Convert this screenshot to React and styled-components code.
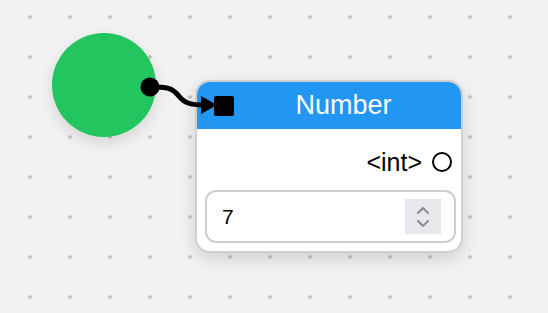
import styled, { createGlobalStyle } from "styled-components";

const GlobalStyle = createGlobalStyle`
  html, body {
    margin: 0;
    padding: 0;
    background: #f2f2f2;
    font-family: "Liberation Sans", Arial, sans-serif;
  }
`;

const Canvas = styled.div`
  position: relative;
  width: 548px;
  height: 313px;
  overflow: hidden;
  background-color: #f2f2f2;
  background-image: radial-gradient(circle, #c6c6c6 1.6px, transparent 2px);
  background-size: 40px 40px;
  background-position: 10px -3px;
`;

const SourceNode = styled.div`
  position: absolute;
  left: ${(p) => p.x}px;
  top: ${(p) => p.y}px;
  width: 104px;
  height: 104px;
  border-radius: 50%;
  background: #22c55e;
  box-shadow: 0 6px 16px rgba(0, 0, 0, 0.12);
`;

const Card = styled.div`
  position: absolute;
  left: ${(p) => p.x}px;
  top: ${(p) => p.y}px;
  width: 268px;
  height: 173px;
  box-sizing: border-box;
  border: 2px solid #cfcfcf;
  border-radius: 15px;
  background: #fff;
  overflow: hidden;
  display: flex;
  flex-direction: column;
  box-shadow: 0 6px 18px rgba(0, 0, 0, 0.14);
`;

const Header = styled.div`
  height: 47px;
  flex-shrink: 0;
  background: #2196f3;
  display: flex;
  align-items: center;
  padding: 0 8px 0 17px;
`;

const InHandle = styled.div`
  width: 20px;
  height: 20px;
  border-radius: 2px;
  background: #000;
  flex-shrink: 0;
`;

const Title = styled.div`
  flex: 1;
  text-align: center;
  color: #fff;
  font-size: 27px;
  line-height: 1;
`;

const Body = styled.div`
  display: flex;
  flex-direction: column;
  padding: 0 5px 8px 8px;
`;

const OutputRow = styled.div`
  height: 56px;
  padding-top: 5px;
  display: flex;
  align-items: center;
  justify-content: flex-end;
  gap: 10px;
  padding-right: 4px;
  font-size: 25px;
  color: #000;
`;

const OutHandle = styled.div`
  width: 16px;
  height: 16px;
  border: 2px solid #000;
  border-radius: 50%;
`;

const NumberField = styled.div`
  height: 53px;
  box-sizing: border-box;
  border: 2px solid #cfcfcf;
  border-radius: 11px;
  display: flex;
  align-items: center;
  justify-content: space-between;
  padding: 0 13px 0 15px;
  font-size: 21px;
  color: #000;
`;

const Spinner = styled.div`
  width: 36px;
  height: 35px;
  background: #e8e8ec;
  display: flex;
  align-items: center;
  justify-content: center;
`;

const EdgeLayer = styled.svg`
  position: absolute;
  left: 0;
  top: 0;
  pointer-events: none;
`;

export default function App() {
  return (
    <>
      <GlobalStyle />
      <Canvas>
        <SourceNode x={52} y={33} />
        <Card x={195} y={80}>
          <Header>
            <InHandle />
            <Title>Number</Title>
          </Header>
          <Body>
            <OutputRow>
              <span>&lt;int&gt;</span>
              <OutHandle />
            </OutputRow>
            <NumberField>
              <span>7</span>
              <Spinner>
                <svg width="16" height="26" viewBox="0 0 16 26" fill="none" stroke="#8e8e96" strokeWidth="2.2" strokeLinecap="round" strokeLinejoin="round">
                  <path d="M3 9 L8 4 L13 9" />
                  <path d="M3 17 L8 22 L13 17" />
                </svg>
              </Spinner>
            </NumberField>
          </Body>
        </Card>
        <EdgeLayer width="548" height="313">
          <path d="M150 87 C 168 87, 172 88, 178 95 C 184 103, 190 105, 204 105" fill="none" stroke="#000" strokeWidth="5" />
          <circle cx="150" cy="87" r="9.5" fill="#000" />
          <polygon points="201,96 217,105 201,114" fill="#000" />
        </EdgeLayer>
      </Canvas>
    </>
  );
}
